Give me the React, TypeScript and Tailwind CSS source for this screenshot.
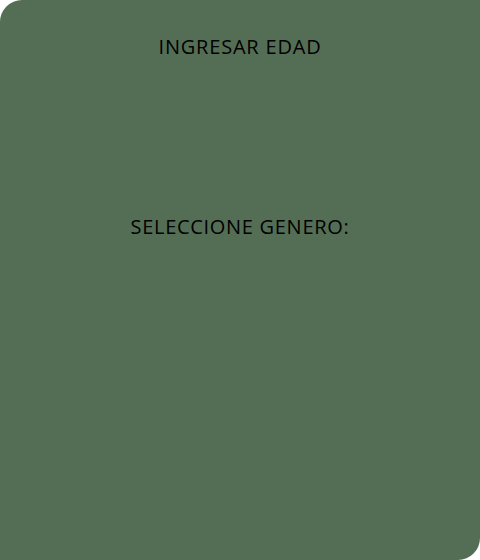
export default function App() {
  return (
    <div className="w-[480px] h-[560px] bg-white">
      <div
        className="w-full h-full bg-[#546e55] rounded-tl-[22px] rounded-br-[22px] flex flex-col items-center pt-[35px] text-black text-[20px] leading-[24px]"
        style={{ fontFamily: '"Open Sans", "Liberation Sans", sans-serif' }}
      >
        <div className="tracking-[0.8px]">INGRESAR EDAD</div>
        <div className="mt-[156px] tracking-[0.7px]">SELECCIONE GENERO:</div>
      </div>
    </div>
  );
}
